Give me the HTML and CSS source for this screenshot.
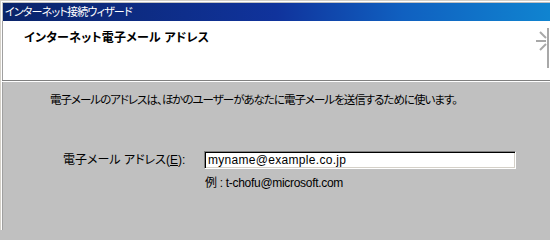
FILE: index.html
```html
<!DOCTYPE html>
<html lang="ja">
<head>
<meta charset="utf-8">
<title>インターネット接続ウィザード</title>
<link rel="stylesheet" href="styles.css">
</head>
<body>
<div class="window">
  <div class="frame">
    <div class="titlebar">インターネット接続ウィザード</div>
    <div class="header">
      <div class="header-title">インターネット電子メール アドレス</div>
      <svg class="wizard-icon" width="16" height="42" viewBox="0 0 16 42">
        <line x1="14" y1="1" x2="14" y2="41" stroke="#a8a8a8" stroke-width="2"/>
        <line x1="2" y1="14" x2="12" y2="14" stroke="#a8a8a8" stroke-width="2"/>
        <line x1="6" y1="5" x2="12" y2="11" stroke="#a8a8a8" stroke-width="2"/>
        <line x1="6" y1="23" x2="12" y2="17" stroke="#a8a8a8" stroke-width="2"/>
      </svg>
    </div>
    <div class="separator"></div>
    <div class="content">
      <p class="description">電子メールのアドレスは、ほかのユーザーがあなたに電子メールを送信するために使います。</p>
      <div class="form">
        <label class="label">電子メール アドレス(<span class="mnemonic">E</span>):</label>
        <div class="edit">myname@example.co.jp</div>
        <div class="example">例 : t-chofu@microsoft.com</div>
      </div>
    </div>
  </div>
</div>
</body>
</html>
```
FILE: styles.css
```css
html, body {
  margin: 0;
  padding: 0;
  overflow: hidden;
  background: #c0c0c0;
}
body {
  width: 550px;
  height: 230px;
  font-family: "Liberation Sans", "Noto Sans CJK JP", sans-serif;
  font-size: 12px;
  font-feature-settings: "palt";
  color: #000;
}
.window {
  height: 229px;
  border-top: 1px solid #d4d0c8;
  border-left: 1px solid #d4d0c8;
  background: #c0c0c0;
}
.frame {
  height: 228px;
  border-top: 1px solid #ffffff;
  border-left: 1px solid #ffffff;
  display: flex;
  flex-direction: column;
}
.titlebar {
  margin: 1px 0 0 1px;
  height: 18px;
  line-height: 18px;
  padding-left: 2px;
  font-size: 11px;
  letter-spacing: -0.8px;
  color: #fff;
  background: linear-gradient(to right, #0a246a 0%, #10339c 50%, #1060c0 73%, #1084d0 100%);
  white-space: nowrap;
}
.header {
  height: 59px;
  background: #fff;
  border-left: 1px solid #a0a0a0;
  display: flex;
  align-items: flex-start;
  justify-content: space-between;
  overflow: hidden;
}
.header-title {
  margin: 9px 0 0 21px;
  font-weight: bold;
  line-height: 16px;
  letter-spacing: 0.2px;
  white-space: nowrap;
}
.wizard-icon {
  margin-top: 6px;
  flex: none;
}
.separator {
  height: 1px;
  background: #808080;
  border-bottom: 1px solid #ffffff;
}
.content {
  flex: 1;
  background: #c0c0c0;
  border-left: 1px solid #a0a0a0;
  padding: 11px 0 0 47px;
}
.description {
  margin: 0;
  font-size: 11.5px;
  letter-spacing: -1px;
  line-height: 14px;
  white-space: nowrap;
}
.form {
  display: grid;
  grid-template-columns: 141px 312px;
  grid-template-rows: 18px 14px;
  row-gap: 7px;
  margin: 44px 0 0 13px;
  align-items: center;
}
.label {
  line-height: 14px;
  white-space: nowrap;
}
.mnemonic {
  text-decoration: underline;
}
.edit {
  box-sizing: border-box;
  height: 18px;
  line-height: 14px;
  padding: 1px 3px;
  letter-spacing: 0.3px;
  background: #fff;
  border: 1px solid;
  border-color: #808080 #ffffff #ffffff #808080;
  box-shadow: inset 1px 1px 0 #000, inset -1px -1px 0 #d4d0c8;
  white-space: nowrap;
}
.example {
  grid-column: 2;
  padding-left: 1px;
  line-height: 14px;
  letter-spacing: -0.3px;
  white-space: nowrap;
}
```
